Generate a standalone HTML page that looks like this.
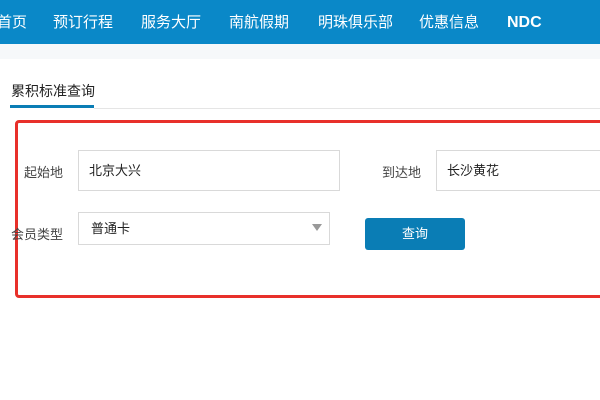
<!DOCTYPE html>
<html><head><meta charset="utf-8"><style>
*{margin:0;padding:0;box-sizing:border-box}
body{width:600px;height:400px;overflow:hidden;background:#fff;font-family:"Liberation Sans","Noto Sans CJK SC",sans-serif;position:relative;color:#333}
.nav{position:absolute;left:0;top:0;width:600px;height:44px;background:#0a88c8}
.nav span{position:absolute;top:11px;color:#fff;font-size:15px;white-space:nowrap}
.band{position:absolute;top:44px;left:0;width:600px;height:15px;background:#f6f8fa}
.a{position:absolute;white-space:nowrap}
.inp{position:absolute;border:1px solid #d9d9d9;background:#fff;font-size:13px;color:#222;padding-left:10px}
</style></head><body>
<div class="nav">
<span style="left:-3px">首页</span>
<span style="left:53px">预订行程</span>
<span style="left:141px">服务大厅</span>
<span style="left:229px">南航假期</span>
<span style="left:318px">明珠俱乐部</span>
<span style="left:419px">优惠信息</span>
<span style="left:507px;top:14px;font-size:16px;font-weight:bold">NDC</span>
</div>
<div class="band"></div>
<div class="a" style="left:11px;top:81px;font-size:14px;color:#222">累积标准查询</div>
<div class="a" style="left:10px;top:105px;width:84px;height:3px;background:#0a7db5"></div>
<div class="a" style="left:94px;top:108px;width:506px;height:1px;background:#e5e5e5"></div>
<div class="a" style="left:15px;top:120px;width:590px;height:178px;border:3px solid #e8302a;border-radius:4px"></div>
<div class="a" style="left:24px;top:162px;font-size:13px;color:#444">起始地</div>
<div class="inp" style="left:78px;top:150px;width:262px;height:41px;line-height:40px">北京大兴</div>
<div class="a" style="left:382px;top:162px;font-size:13px;color:#444">到达地</div>
<div class="inp" style="left:436px;top:150px;width:170px;height:41px;line-height:40px">长沙黄花</div>
<div class="a" style="left:11px;top:224px;font-size:13px;color:#444">会员类型</div>
<div class="inp" style="left:78px;top:212px;width:252px;height:33px;line-height:32px;padding-left:12px">普通卡</div>
<div class="a" style="left:312px;top:224px;width:0;height:0;border-left:5px solid transparent;border-right:5px solid transparent;border-top:7px solid #999"></div>
<div class="a" style="left:365px;top:218px;width:100px;height:32px;background:#0a7db5;border-radius:3px;color:#fff;font-size:13px;text-align:center;line-height:32px">查询</div>
</body></html>
